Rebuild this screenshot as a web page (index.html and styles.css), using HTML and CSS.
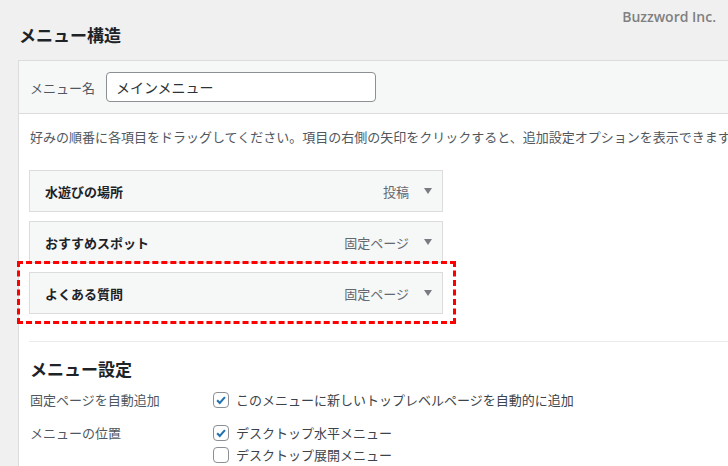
FILE: index.html
```html
<!DOCTYPE html>
<html lang="ja">

<head>
    <meta charset="UTF-8">
    <meta name="viewport" content="width=device-width, initial-scale=1.0">
    <title>メニュー構造</title>
    <link rel="stylesheet" href="styles.css">
</head>

<body>
    <div class="watermark">Buzzword Inc.</div>

    <div class="wrap">
        <h2 class="page-title">メニュー構造</h2>

        <div class="menu-box">
            <!-- menu name -->
            <div class="menu-header">
                <label class="name-label" for="menu-name">メニュー名</label>
                <input type="text" id="menu-name" class="name-input" value="メインメニュー">
            </div>

            <div class="menu-body">
                <p class="drag-hint">好みの順番に各項目をドラッグしてください。項目の右側の矢印をクリックすると、追加設定オプションを表示できます。</p>

                <ul class="menu-items">
                    <li class="menu-item">
                        <span class="item-title">水遊びの場所</span>
                        <span class="item-type">投稿</span>
                        <span class="item-arrow"></span>
                    </li>
                    <li class="menu-item">
                        <span class="item-title">おすすめスポット</span>
                        <span class="item-type">固定ページ</span>
                        <span class="item-arrow"></span>
                    </li>
                    <li class="menu-item highlight">
                        <span class="item-title">よくある質問</span>
                        <span class="item-type">固定ページ</span>
                        <span class="item-arrow"></span>
                    </li>
                </ul>

                <!-- menu settings -->
                <div class="menu-settings">
                    <h3 class="settings-title">メニュー設定</h3>

                    <div class="setting-row">
                        <div class="setting-label">固定ページを自動追加</div>
                        <div class="setting-options">
                            <label class="option">
                                <span class="checkbox checked">
                                    <svg viewBox="0 0 16 16"><path d="M3.6 8.2l3 3.1 5.9-6.6" /></svg>
                                </span>
                                このメニューに新しいトップレベルページを自動的に追加
                            </label>
                        </div>
                    </div>

                    <div class="setting-row">
                        <div class="setting-label">メニューの位置</div>
                        <div class="setting-options">
                            <label class="option">
                                <span class="checkbox checked">
                                    <svg viewBox="0 0 16 16"><path d="M3.6 8.2l3 3.1 5.9-6.6" /></svg>
                                </span>
                                デスクトップ水平メニュー
                            </label>
                            <label class="option">
                                <span class="checkbox"></span>
                                デスクトップ展開メニュー
                            </label>
                        </div>
                    </div>
                </div>
            </div>
        </div>
    </div>
</body>

</html>
```

FILE: styles.css
```css
html {
    overflow: hidden;
}

body {
    margin: 0;
    padding: 0;
    background-color: #f0f0f1;
    font-family: "Noto Sans CJK JP", "Noto Sans", sans-serif;
    font-size: 13px;
    color: #3c434a;
}

.watermark {
    position: absolute;
    top: 7px;
    right: 12px;
    font-family: "Open Sans", "Noto Sans", sans-serif;
    font-size: 14px;
    font-weight: 600;
    color: #808080;
    line-height: 20px;
}

.wrap {
    padding-left: 18px;
    width: 800px;
}

.page-title {
    margin: 23px 0 13px 1px;
    font-size: 17px;
    line-height: 24px;
    font-weight: 700;
    color: #1d2327;
}

.menu-box {
    border: 1px solid #dcdcde;
    background: #ffffff;
}

.menu-header {
    display: flex;
    align-items: center;
    background: #f6f7f7;
    border-bottom: 1px solid #dcdcde;
    padding: 11px 11px;
}

.name-label {
    width: 76px;
    color: #50575e;
}

.name-input {
    box-sizing: border-box;
    width: 270px;
    height: 30px;
    margin: 0;
    padding: 0 9px;
    border: 1px solid #8c8f94;
    border-radius: 4px;
    font-family: inherit;
    font-size: 14px;
    color: #2c3338;
    background: #ffffff;
}

.menu-body {
    padding: 13px 10px 0;
}

.drag-hint {
    margin: 0 0 0 1px;
    line-height: 20px;
    white-space: nowrap;
    color: #50575e;
}

.menu-items {
    list-style: none;
    margin: 23px 0 0;
    padding: 0;
}

.menu-item {
    box-sizing: border-box;
    display: flex;
    align-items: center;
    width: 414px;
    height: 42px;
    margin-bottom: 9px;
    padding: 0 10px 0 15px;
    border: 1px solid #dcdcde;
    background: #f6f7f7;
    position: relative;
}

.highlight::after {
    content: "";
    position: absolute;
    top: -12px;
    left: -13px;
    right: -14px;
    bottom: -11px;
    border: 3px dashed #ff0000;
}

.item-title {
    flex: 1;
    font-weight: 700;
    color: #1d2327;
}

.item-type {
    color: #646970;
}

.item-arrow {
    width: 0;
    height: 0;
    margin-left: 15px;
    border-left: 4px solid transparent;
    border-right: 4px solid transparent;
    border-top: 6px solid #787c82;
}

.menu-settings {
    margin-top: 27px;
    border-top: 1px solid #ebebeb;
    padding: 15px 0 0 1px;
}

.settings-title {
    margin: 0 0 8px;
    font-size: 17px;
    line-height: 24px;
    font-weight: 700;
    color: #1d2327;
}

.setting-row {
    display: flex;
    margin-bottom: 11px;
}

.setting-label {
    width: 183px;
    line-height: 22px;
    color: #50575e;
}

.option {
    display: flex;
    align-items: center;
    line-height: 22px;
    color: #3c434a;
}

.checkbox {
    box-sizing: border-box;
    display: inline-block;
    width: 16px;
    height: 16px;
    margin-right: 7px;
    border: 1px solid #8c8f94;
    border-radius: 4px;
    background: #ffffff;
}

.checkbox svg {
    display: block;
    width: 14px;
    height: 14px;
    fill: none;
    stroke: #2271b1;
    stroke-width: 2.4;
}
```
